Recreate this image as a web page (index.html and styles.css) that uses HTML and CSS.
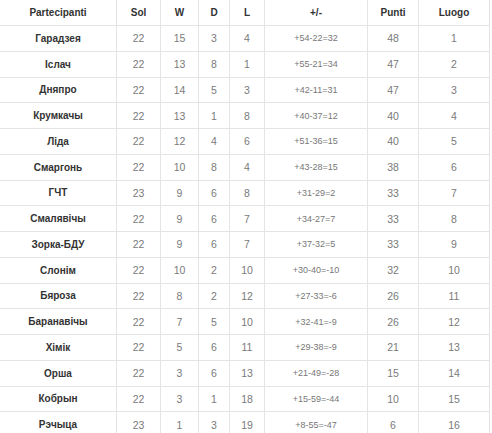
FILE: index.html
```html
<!DOCTYPE html>
<html>
<head>
<meta charset="utf-8">
<link rel="stylesheet" href="styles.css">
</head>
<body>
<table class="standings">
<colgroup>
<col class="c-team"><col class="c-sol"><col class="c-w"><col class="c-d"><col class="c-l"><col class="c-diff"><col class="c-pts"><col class="c-pos">
</colgroup>
<thead>
<tr><th>Partecipanti</th><th>Sol</th><th>W</th><th>D</th><th>L</th><th>+/-</th><th>Punti</th><th>Luogo</th></tr>
</thead>
<tbody>
<tr><td class="team">Гарадзея</td><td>22</td><td>15</td><td>3</td><td>4</td><td class="diff">+54-22=32</td><td>48</td><td>1</td></tr>
<tr><td class="team">Іслач</td><td>22</td><td>13</td><td>8</td><td>1</td><td class="diff">+55-21=34</td><td>47</td><td>2</td></tr>
<tr><td class="team">Дняпро</td><td>22</td><td>14</td><td>5</td><td>3</td><td class="diff">+42-11=31</td><td>47</td><td>3</td></tr>
<tr><td class="team">Крумкачы</td><td>22</td><td>13</td><td>1</td><td>8</td><td class="diff">+40-37=12</td><td>40</td><td>4</td></tr>
<tr><td class="team">Ліда</td><td>22</td><td>12</td><td>4</td><td>6</td><td class="diff">+51-36=15</td><td>40</td><td>5</td></tr>
<tr><td class="team">Смаргонь</td><td>22</td><td>10</td><td>8</td><td>4</td><td class="diff">+43-28=15</td><td>38</td><td>6</td></tr>
<tr><td class="team">ГЧТ</td><td>23</td><td>9</td><td>6</td><td>8</td><td class="diff">+31-29=2</td><td>33</td><td>7</td></tr>
<tr><td class="team">Смалявічы</td><td>22</td><td>9</td><td>6</td><td>7</td><td class="diff">+34-27=7</td><td>33</td><td>8</td></tr>
<tr><td class="team">Зорка-БДУ</td><td>22</td><td>9</td><td>6</td><td>7</td><td class="diff">+37-32=5</td><td>33</td><td>9</td></tr>
<tr><td class="team">Слонім</td><td>22</td><td>10</td><td>2</td><td>10</td><td class="diff">+30-40=-10</td><td>32</td><td>10</td></tr>
<tr><td class="team">Бяроза</td><td>22</td><td>8</td><td>2</td><td>12</td><td class="diff">+27-33=-6</td><td>26</td><td>11</td></tr>
<tr><td class="team">Баранавічы</td><td>22</td><td>7</td><td>5</td><td>10</td><td class="diff">+32-41=-9</td><td>26</td><td>12</td></tr>
<tr><td class="team">Хімік</td><td>22</td><td>5</td><td>6</td><td>11</td><td class="diff">+29-38=-9</td><td>21</td><td>13</td></tr>
<tr><td class="team">Орша</td><td>22</td><td>3</td><td>6</td><td>13</td><td class="diff">+21-49=-28</td><td>15</td><td>14</td></tr>
<tr><td class="team">Кобрын</td><td>22</td><td>3</td><td>1</td><td>18</td><td class="diff">+15-59=-44</td><td>10</td><td>15</td></tr>
<tr><td class="team">Рэчыца</td><td>23</td><td>1</td><td>3</td><td>19</td><td class="diff">+8-55=-47</td><td>6</td><td>16</td></tr>
</tbody>
</table>
</body>
</html>
```
FILE: styles.css
```css
html, body {
  margin: 0;
  padding: 0;
  background: #ffffff;
}

.standings {
  border-collapse: collapse;
  table-layout: fixed;
  width: 490px;
  margin: -1px 0 0 -1px;
  font-family: "Liberation Sans", Arial, sans-serif;
}

.c-team { width: 117px; }
.c-sol { width: 44px; }
.c-w { width: 38px; }
.c-d { width: 31px; }
.c-l { width: 35px; }
.c-diff { width: 103px; }
.c-pts { width: 51px; }
.c-pos { width: 71px; }

.standings th,
.standings td {
  border: 1px solid #e4e4e4;
  padding: 0;
  text-align: center;
  vertical-align: middle;
}

.standings th {
  height: 25px;
  font-size: 10px;
  font-weight: bold;
  color: #333333;
}

.standings td {
  height: 24.75px;
  font-size: 10.5px;
  color: #7a7a7a;
}

.standings td.team {
  font-size: 10px;
  font-weight: bold;
  color: #333333;
}

.standings td.diff {
  font-size: 9px;
  color: #777777;
}
```
